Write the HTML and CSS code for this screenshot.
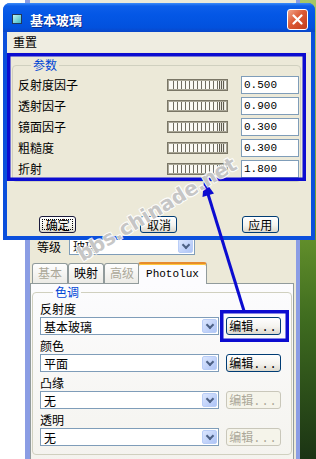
FILE: index.html
```html
<!DOCTYPE html>
<html lang="zh-CN">
<head>
<meta charset="UTF-8">
<title>基本玻璃</title>
<link rel="stylesheet" href="styles.css">
</head>
<body>
<div class="desktop">

    <!-- material editor behind the dialog -->
    <div class="backwin">
        <div class="level-row">
            <span class="lbl">等级</span>
            <div class="combo combo-level"><span>玻璃</span><i class="drop"></i></div>
        </div>
        <div class="tabs">
            <span class="tab off">基本</span>
            <span class="tab">映射</span>
            <span class="tab off">高级</span>
            <span class="tab active">Photolux</span>
        </div>
        <div class="tabpage">
            <fieldset class="group tone">
                <legend>色调</legend>
                <div class="field">
                    <div class="flabel">反射度</div>
                    <div class="frow">
                        <div class="combo"><span>基本玻璃</span><i class="drop"></i></div>
                        <button class="btn">编辑<span class="dots">...</span></button>
                    </div>
                </div>
                <div class="field">
                    <div class="flabel">颜色</div>
                    <div class="frow">
                        <div class="combo"><span>平面</span><i class="drop"></i></div>
                        <button class="btn">编辑<span class="dots">...</span></button>
                    </div>
                </div>
                <div class="field">
                    <div class="flabel">凸缘</div>
                    <div class="frow">
                        <div class="combo"><span>无</span><i class="drop"></i></div>
                        <button class="btn" disabled>编辑<span class="dots">...</span></button>
                    </div>
                </div>
                <div class="field">
                    <div class="flabel">透明</div>
                    <div class="frow">
                        <div class="combo"><span>无</span><i class="drop"></i></div>
                        <button class="btn" disabled>编辑<span class="dots">...</span></button>
                    </div>
                </div>
            </fieldset>
        </div>
    </div>

    <!-- the dialog itself -->
    <div class="dialog">
        <div class="titlebar">
            <i class="app-icon"></i>
            <span class="title">基本玻璃</span>
            <span class="close">
                <svg width="11" height="11" viewBox="0 0 11 11"><path d="M1.5 1.5 L9.5 9.5 M9.5 1.5 L1.5 9.5" stroke="#fff" stroke-width="2.2" stroke-linecap="round"/></svg>
            </span>
        </div>
        <div class="dlg-body">
            <div class="menubar"><span>重置</span></div>
            <fieldset class="group params">
                <legend>参数</legend>
                <div class="prow"><span class="plabel">反射度因子</span><i class="slider"></i><span class="num">0.500</span></div>
                <div class="prow"><span class="plabel">透射因子</span><i class="slider"></i><span class="num">0.900</span></div>
                <div class="prow"><span class="plabel">镜面因子</span><i class="slider"></i><span class="num">0.300</span></div>
                <div class="prow"><span class="plabel">粗糙度</span><i class="slider"></i><span class="num">0.300</span></div>
                <div class="prow"><span class="plabel">折射</span><i class="slider"></i><span class="num">1.800</span></div>
            </fieldset>
            <div class="btnrow">
                <button class="btn dlg-btn default">确定</button>
                <button class="btn dlg-btn">取消</button>
                <button class="btn dlg-btn">应用</button>
            </div>
        </div>
    </div>

    <!-- annotations drawn over the screenshot -->
    <svg class="marks" width="316" height="459" viewBox="0 0 316 459">
        <rect x="8.75" y="54.75" width="295.5" height="124.5" fill="none" stroke="#0c0cd0" stroke-width="3.5"/>
        <rect x="221.75" y="311.75" width="65.5" height="28.5" fill="none" stroke="#0c0cd0" stroke-width="3.5"/>
        <line x1="244" y1="311" x2="208" y2="194" stroke="#0c0cd0" stroke-width="3"/>
        <polygon points="204,180 214,193.5 202.5,197" fill="#0c0cd0"/>
    </svg>

    <div class="watermark">bbs.chinade.net</div>
</div>
</body>
</html>
```

FILE: styles.css
```css
* {
    box-sizing: border-box;
}
html, body {
    margin: 0;
    padding: 0;
}
body {
    width: 316px;
    height: 459px;
    overflow: hidden;
    font: 12px "Noto Sans CJK SC", sans-serif;
    color: #000;
}
.desktop {
    position: relative;
    width: 316px;
    height: 459px;
    background:
        linear-gradient(90deg, #fff 0 300px, transparent 300px),
        linear-gradient(180deg, #a6c766 0%, #6f9c2f 45%, #3e6b1f 70%, #1b3414 100%);
}

/* ---------- window behind ---------- */
.backwin {
    position: absolute;
    left: 25px;
    top: 0;
    width: 275px;
    height: 459px;
    background: #ece9d8;
    border-left: 5px solid #8b9de4;
    border-right: 4px solid #8b9de4;
    padding-top: 237px;
}
.level-row {
    display: flex;
    align-items: center;
    height: 18px;
    padding-left: 7px;
}
.level-row .lbl {
    width: 32px;
}
.combo {
    display: flex;
    align-items: center;
    justify-content: space-between;
    height: 18px;
    width: 179px;
    background: #fff;
    border: 1px solid #7f9db9;
    padding: 0 1px 0 3px;
}
.combo-level {
    width: 126px;
}
.drop {
    position: relative;
    width: 15px;
    height: 14px;
    border-radius: 2px;
    border: 1px solid #b9cdf7;
    background: linear-gradient(135deg, #dbe6fe, #aec4f6);
}
.drop::after {
    content: "";
    position: absolute;
    left: 4px;
    top: 2px;
    width: 4px;
    height: 4px;
    border-right: 2px solid #4d6185;
    border-bottom: 2px solid #4d6185;
    transform: rotate(45deg);
}

.tabs {
    display: flex;
    align-items: flex-end;
    height: 21px;
    margin-top: 7px;
    padding-left: 2px;
}
.tab {
    height: 20px;
    line-height: 18px;
    padding: 0 5px;
    border: 1px solid #919b9c;
    border-bottom: none;
    border-radius: 3px 3px 0 0;
    background: linear-gradient(#fefefe, #ecebe6);
}
.tab.off {
    color: #aca899;
}
.tab.active {
    position: relative;
    height: 22px;
    margin-left: -2px;
    margin-bottom: -1px;
    padding: 0 7px;
    border-top: 2px solid #e68b2c;
    box-shadow: inset 0 1px #ffc73c;
    background: #fcfcfe;
    font-family: "Liberation Mono", "DejaVu Sans Mono", monospace;
    font-size: 11px;
    line-height: 20px;
}
.tabpage {
    width: 264px;
    height: 180px;
    border: 1px solid #919b9c;
    background: linear-gradient(#fcfcfe, #f4f3ee);
    padding: 2px 1px 0;
}

.group {
    margin: 0;
    border: 1px solid #d0d0bf;
    border-radius: 4px;
}
.group legend {
    color: #0046d5;
    line-height: 12px;
    padding: 0 2px;
    margin-left: 13px;
}
.tone {
    padding: 2px 7px 6px 7px;
}
.field {
    margin-bottom: 2px;
}
.flabel {
    height: 17px;
    line-height: 17px;
}
.frow {
    display: flex;
    gap: 7px;
}

.btn {
    height: 18px;
    width: 55px;
    padding: 0;
    font: 12px "Noto Sans CJK SC", sans-serif;
    line-height: 16px;
    color: #000;
    border: 1px solid #003c74;
    border-radius: 3px;
    background: linear-gradient(#ffffff, #f4f3ee 55%, #dcd8cc);
}
.btn .dots {
    font-family: "Liberation Mono", monospace;
    letter-spacing: 1px;
}
.btn:disabled {
    color: #aca899;
    border-color: #c9c7ba;
    background: #f5f4ea;
}

/* ---------- dialog ---------- */
.dialog {
    position: absolute;
    left: 3px;
    top: 3px;
    width: 312px;
    height: 237px;
    display: flex;
    flex-direction: column;
    background: #0b4fdc;
    border-radius: 7px 7px 0 0;
}
.titlebar {
    display: flex;
    align-items: center;
    height: 29px;
    padding: 3px 7px 0 9px;
    border-radius: 7px 7px 0 0;
    background: linear-gradient(#3d8cf9 0, #0d5ee9 3px, #0457e6 40%, #0251dd 85%, #0a46c8 100%);
}
.app-icon {
    width: 10px;
    height: 10px;
    border: 1px solid #22385a;
    background: linear-gradient(135deg, #bff4f0, #3fb8c4);
}
.title {
    flex: 1;
    margin-left: 8px;
    color: #fff;
    font-weight: bold;
    font-size: 13px;
    text-shadow: 1px 1px #0a2a8a;
}
.close {
    display: flex;
    align-items: center;
    justify-content: center;
    width: 21px;
    height: 21px;
    border: 1px solid #fff;
    border-radius: 3px;
    background: linear-gradient(135deg, #f0a48a, #dd5a35 45%, #c13d1c);
}
.dlg-body {
    flex: 1;
    display: flex;
    flex-direction: column;
    margin: 0 4px 4px;
    background: #ece9d8;
}
.menubar {
    height: 20px;
    line-height: 20px;
    padding-left: 6px;
    background: #efede1;
}
.params {
    margin: 7px 10px 0 5px;
    padding: 3px 1px 2px 5px;
}
.prow {
    display: flex;
    align-items: center;
    height: 21px;
}
.plabel {
    flex: 1;
}
.slider {
    width: 61px;
    height: 12px;
    margin-right: 13px;
    border: 1px solid #7a7666;
    box-shadow: inset 0 0 0 1px #a9a696;
    background:
        repeating-linear-gradient(90deg, #5f5c50 0 1px, #e8e6dc 1px 2px) right 2px top 0 / 6px 100% no-repeat,
        repeating-linear-gradient(90deg, #faf9f3 0 3px, #6f6c60 3px 4px) 2px 0 / 52px 100% no-repeat,
        #faf9f3;
}
.num {
    width: 58px;
    height: 18px;
    line-height: 16px;
    padding-left: 2px;
    background: #fff;
    border: 1px solid #7f9db9;
    font-family: "Liberation Mono", "DejaVu Sans Mono", monospace;
    font-size: 11px;
}
.btnrow {
    margin-top: auto;
    padding-bottom: 3px;
    display: flex;
    justify-content: space-around;
}
.dlg-btn {
    width: 37px;
    height: 17px;
    line-height: 15px;
}
.default {
    border-color: #1a1a3c;
    outline: 1px dotted #000;
    outline-offset: -4px;
}

/* ---------- overlays ---------- */
.marks {
    position: absolute;
    left: 0;
    top: 0;
}
.watermark {
    position: absolute;
    left: 66px;
    top: 197px;
    transform: rotate(-31deg);
    font: bold 20px "DejaVu Sans", sans-serif;
    color: rgba(150, 150, 150, 0.55);
    text-shadow: 1px 1px rgba(255,255,255,0.8), -1px -1px rgba(255,255,255,0.8), 1px -1px rgba(255,255,255,0.8), -1px 1px rgba(255,255,255,0.8);
    white-space: nowrap;
}
```
